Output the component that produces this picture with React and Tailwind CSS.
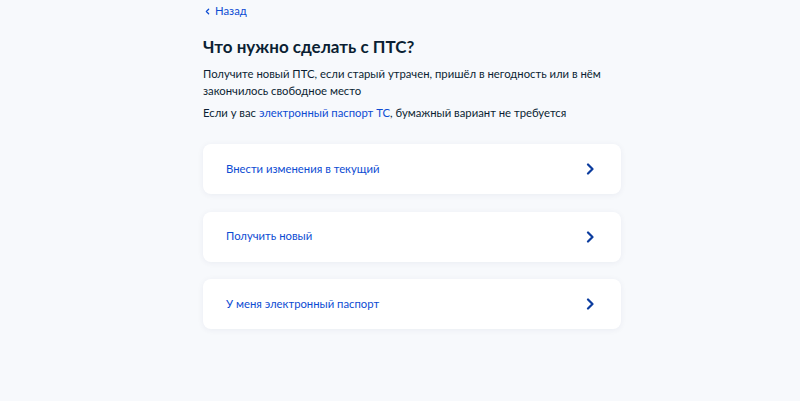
import { ChevronLeft } from 'lucide-react'

const OPTIONS = ['Внести изменения в текущий', 'Получить новый', 'У меня электронный паспорт']

function Arrow() {
  return (
    <svg width="8" height="12" viewBox="0 0 8 12" fill="none" className="text-[#0b3c9e]">
      <path d="M2 1.5L6.5 6L2 10.5" stroke="currentColor" strokeWidth="2.2" strokeLinecap="round" strokeLinejoin="round" />
    </svg>
  )
}

export default function App() {
  return (
    <div className="min-h-[401px] bg-[#f7f9fc] font-['Lato',sans-serif] text-[#0b1f33]">
      <div className="ml-[203px] w-[418px] pt-[3px]">
        {/* Back link */}
        <a href="#" className="flex h-[16px] items-center gap-[3px] text-[11.3px] text-[#0d4cd3]">
          <ChevronLeft className="h-[9px] w-[9px] stroke-[3.5]" />
          <span>Назад</span>
        </a>

        <h1 className="mt-[17px] text-[17px] font-bold leading-[22px]">Что нужно сделать с ПТС?</h1>

        <p className="mt-[6.5px] text-[11.3px] leading-[17px]">
          Получите новый ПТС, если старый утрачен, пришёл в негодность или в нём закончилось свободное место
        </p>
        <p className="mt-[5px] text-[11.3px] leading-[17px]">
          Если у вас <a href="#" className="text-[#0d4cd3]">электронный паспорт ТС</a>, бумажный вариант не требуется
        </p>

        {/* Options */}
        <div className="mt-[23.5px] flex flex-col gap-[17.5px]">
          {OPTIONS.map((label) => (
            <button
              key={label}
              className="flex h-[50px] items-center justify-between rounded-[8px] bg-white pl-[23px] pr-[27px] text-left text-[11.3px] text-[#0d4cd3] shadow-[0_1px_6px_rgba(10,40,90,0.06)]"
            >
              <span>{label}</span>
              <Arrow />
            </button>
          ))}
        </div>
      </div>
    </div>
  )
}
